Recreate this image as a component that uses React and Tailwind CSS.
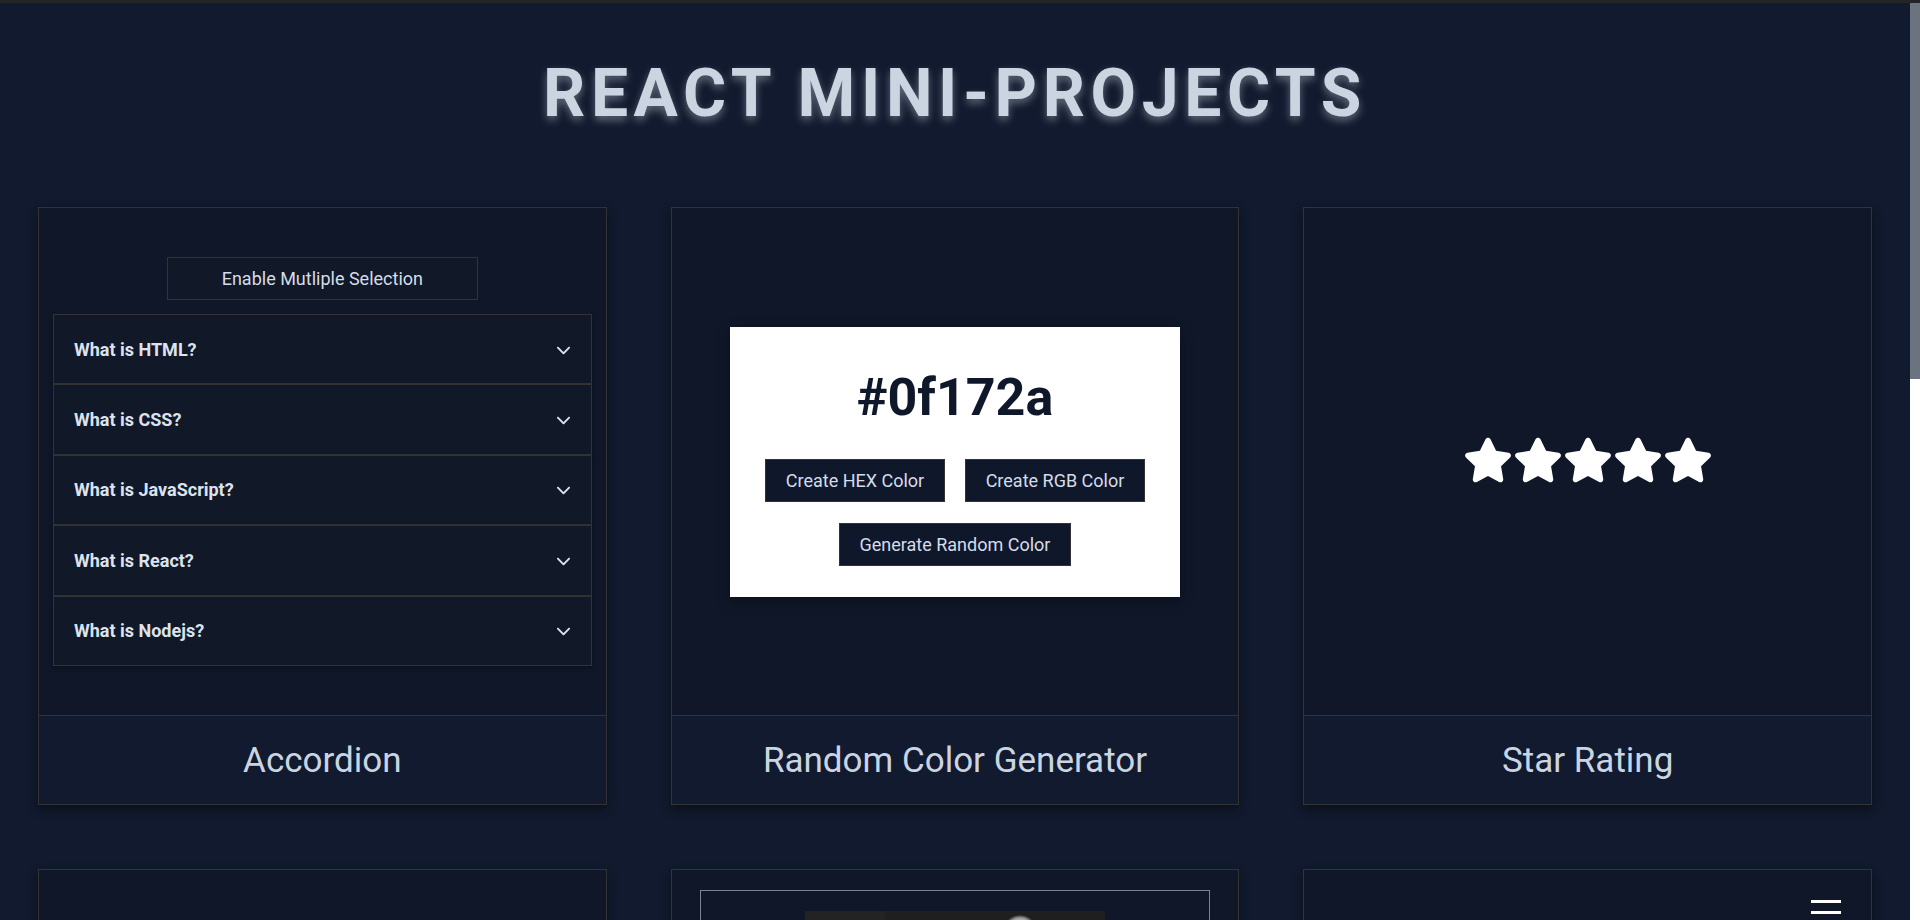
import React from "react";
import { FaStar, FaChevronDown } from "react-icons/fa6";

const questions = [
  "What is HTML?",
  "What is CSS?",
  "What is JavaScript?",
  "What is React?",
  "What is Nodejs?",
];

function Card({ title, children, previewClass = "" }) {
  return (
    <div className="flex flex-col border border-[#333] shadow-[0_4px_10px_rgba(0,0,0,0.45)]">
      <div className={"h-[507px] bg-[#0f1729] " + previewClass}>{children}</div>
      {title ? (
        <div className="flex h-[89px] items-center justify-center border-t border-[#333] bg-[#111a2e] pt-[2px] text-[35px] text-[#cbd5e1]">
          {title}
        </div>
      ) : null}
    </div>
  );
}

function Accordion() {
  return (
    <div className="flex h-full flex-col items-center justify-center px-[14px]">
      <button className="h-[43px] w-[311px] border border-[#333] bg-[#111827] text-[18px] text-[#d5dcea]">
        Enable Mutliple Selection
      </button>
      <div className="mt-[14px] flex w-full flex-col">
        {questions.map((q) => (
          <div
            key={q}
            className="flex h-[70.4px] items-center justify-between border border-[#333] bg-[#111827] px-[20px] shadow-[0_2px_4px_rgba(0,0,0,0.35)]"
          >
            <span className="text-[18px] font-bold text-[#dde3ee]">{q}</span>
            <FaChevronDown className="text-[15px] text-[#dde3ee]" />
          </div>
        ))}
      </div>
    </div>
  );
}

function ColorGen() {
  return (
    <div className="flex h-full items-center justify-center">
      <div className="flex h-[270px] w-[450px] flex-col items-center bg-white pt-[40px] shadow-[0_4px_12px_rgba(0,0,0,0.35)]">
        <div className="text-[52px] font-bold leading-[62px] text-[#0f172a]">#0f172a</div>
        <div className="mt-[30px] flex gap-[20px]">
          <button className="h-[43px] w-[180px] border border-[#333] bg-[#0f172a] text-[18px] text-[#d5dcea]">
            Create HEX Color
          </button>
          <button className="h-[43px] w-[180px] border border-[#333] bg-[#0f172a] text-[18px] text-[#d5dcea]">
            Create RGB Color
          </button>
        </div>
        <button className="mt-[21px] h-[43px] w-[232px] border border-[#333] bg-[#0f172a] text-[18px] text-[#d5dcea]">
          Generate Random Color
        </button>
      </div>
    </div>
  );
}

function Stars() {
  return (
    <div className="flex h-full items-center justify-center">
      <div className="-mt-[4px] flex">
        {[0, 1, 2, 3, 4].map((i) => (
          <FaStar key={i} className="text-[50px] text-white" />
        ))}
      </div>
    </div>
  );
}

export default function App() {
  return (
    <div className="flex h-[920px] w-full flex-col overflow-hidden bg-[#111a2e] [font-family:Roboto,'Liberation_Sans',sans-serif]">
      <div className="h-[3px] w-full shrink-0 bg-[#232428]" />
      <div className="flex min-h-0 flex-1">
        <main className="min-w-0 flex-1 pt-[52px]">
          <h1 className="text-center text-[66px] font-bold leading-[77px] tracking-[5.6px] text-[#cbd5e1] [text-shadow:0_4px_8px_rgba(203,213,225,0.45)]">
            REACT MINI-PROJECTS
          </h1>
          <div className="mt-[75px] grid grid-cols-3 gap-16 px-[38px]">
            <Card title="Accordion">
              <Accordion />
            </Card>
            <Card title="Random Color Generator">
              <ColorGen />
            </Card>
            <Card title="Star Rating">
              <Stars />
            </Card>

            <Card />
            <Card previewClass="px-[28px] pt-[20px]">
              <div className="flex h-[300px] justify-center border border-[#7b8494] pt-[20px]">
                <svg width="300" height="200" viewBox="0 0 300 200" className="block">
                  <defs>
                    <radialGradient id="head" cx="0.5" cy="0.5" r="0.5">
                      <stop offset="0%" stopColor="#e5e5e5" />
                      <stop offset="70%" stopColor="#9a9a9a" />
                      <stop offset="100%" stopColor="#2a2a2a" />
                    </radialGradient>
                  </defs>
                  <rect width="300" height="200" fill="#1f1f1f" />
                  <rect x="0" width="80" height="200" fill="#232323" />
                  <ellipse cx="215" cy="14" rx="14" ry="10" fill="url(#head)" />
                </svg>
              </div>
            </Card>
            <Card previewClass="flex justify-end pr-[30px] pt-[30px]">
              <div className="flex flex-col gap-[8px]">
                <div className="h-[3px] w-[30px] bg-white" />
                <div className="h-[3px] w-[30px] bg-white" />
                <div className="h-[3px] w-[30px] bg-white" />
              </div>
            </Card>
          </div>
        </main>
        <div className="flex w-[10px] shrink-0 flex-col bg-white">
          <div className="h-[376px] bg-[#6b7280]" />
        </div>
      </div>
    </div>
  );
}
